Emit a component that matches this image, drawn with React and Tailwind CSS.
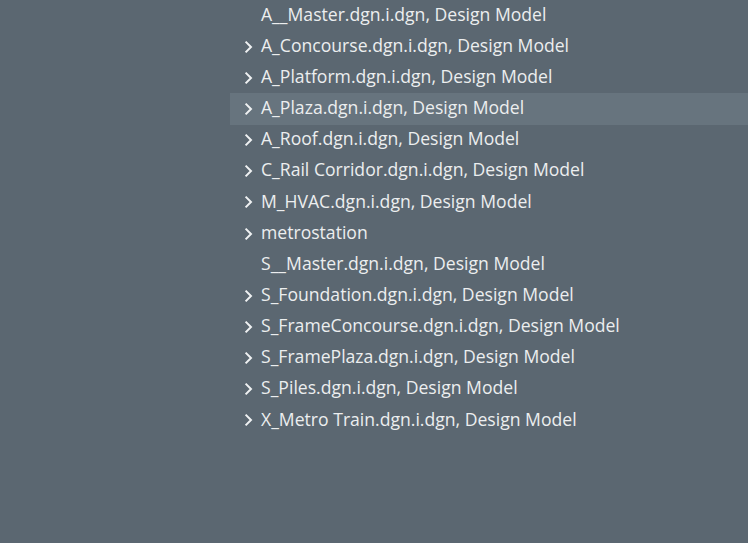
export default function App() {
  const rows = [
    { t: "A__Master.dgn.i.dgn, Design Model", c: false },
    { t: "A_Concourse.dgn.i.dgn, Design Model", c: true },
    { t: "A_Platform.dgn.i.dgn, Design Model", c: true },
    { t: "A_Plaza.dgn.i.dgn, Design Model", c: true, h: true },
    { t: "A_Roof.dgn.i.dgn, Design Model", c: true },
    { t: "C_Rail Corridor.dgn.i.dgn, Design Model", c: true },
    { t: "M_HVAC.dgn.i.dgn, Design Model", c: true },
    { t: "metrostation", c: true },
    { t: "S__Master.dgn.i.dgn, Design Model", c: false },
    { t: "S_Foundation.dgn.i.dgn, Design Model", c: true },
    { t: "S_FrameConcourse.dgn.i.dgn, Design Model", c: true },
    { t: "S_FramePlaza.dgn.i.dgn, Design Model", c: true },
    { t: "S_Piles.dgn.i.dgn, Design Model", c: true },
    { t: "X_Metro Train.dgn.i.dgn, Design Model", c: true },
  ];
  return (
    <div className="w-[748px] h-[543px] bg-[#5b6771] overflow-hidden pl-[230px]" style={{ fontFamily: '"Open Sans", sans-serif' }}>
      {rows.map((r, i) => (
        <div key={i} className={`flex items-center h-[31.15px] ${r.h ? "bg-[#67747e]" : ""}`}>
          <div className="w-[31px] h-full shrink-0 flex items-center pl-[14px]">
            {r.c && (
              <svg viewBox="0 0 10 16" className="w-[10px] h-[16px] min-w-[10px] shrink-0 block">
                <path d="M1.6 2.6 L7 8 L1.6 13.4" fill="none" stroke="#f0f2f3" strokeWidth="2" />
              </svg>
            )}
          </div>
          <span className="text-[17.6px] text-[#eceeef] whitespace-nowrap leading-none -mt-[2px]">{r.t}</span>
        </div>
      ))}
    </div>
  );
}
